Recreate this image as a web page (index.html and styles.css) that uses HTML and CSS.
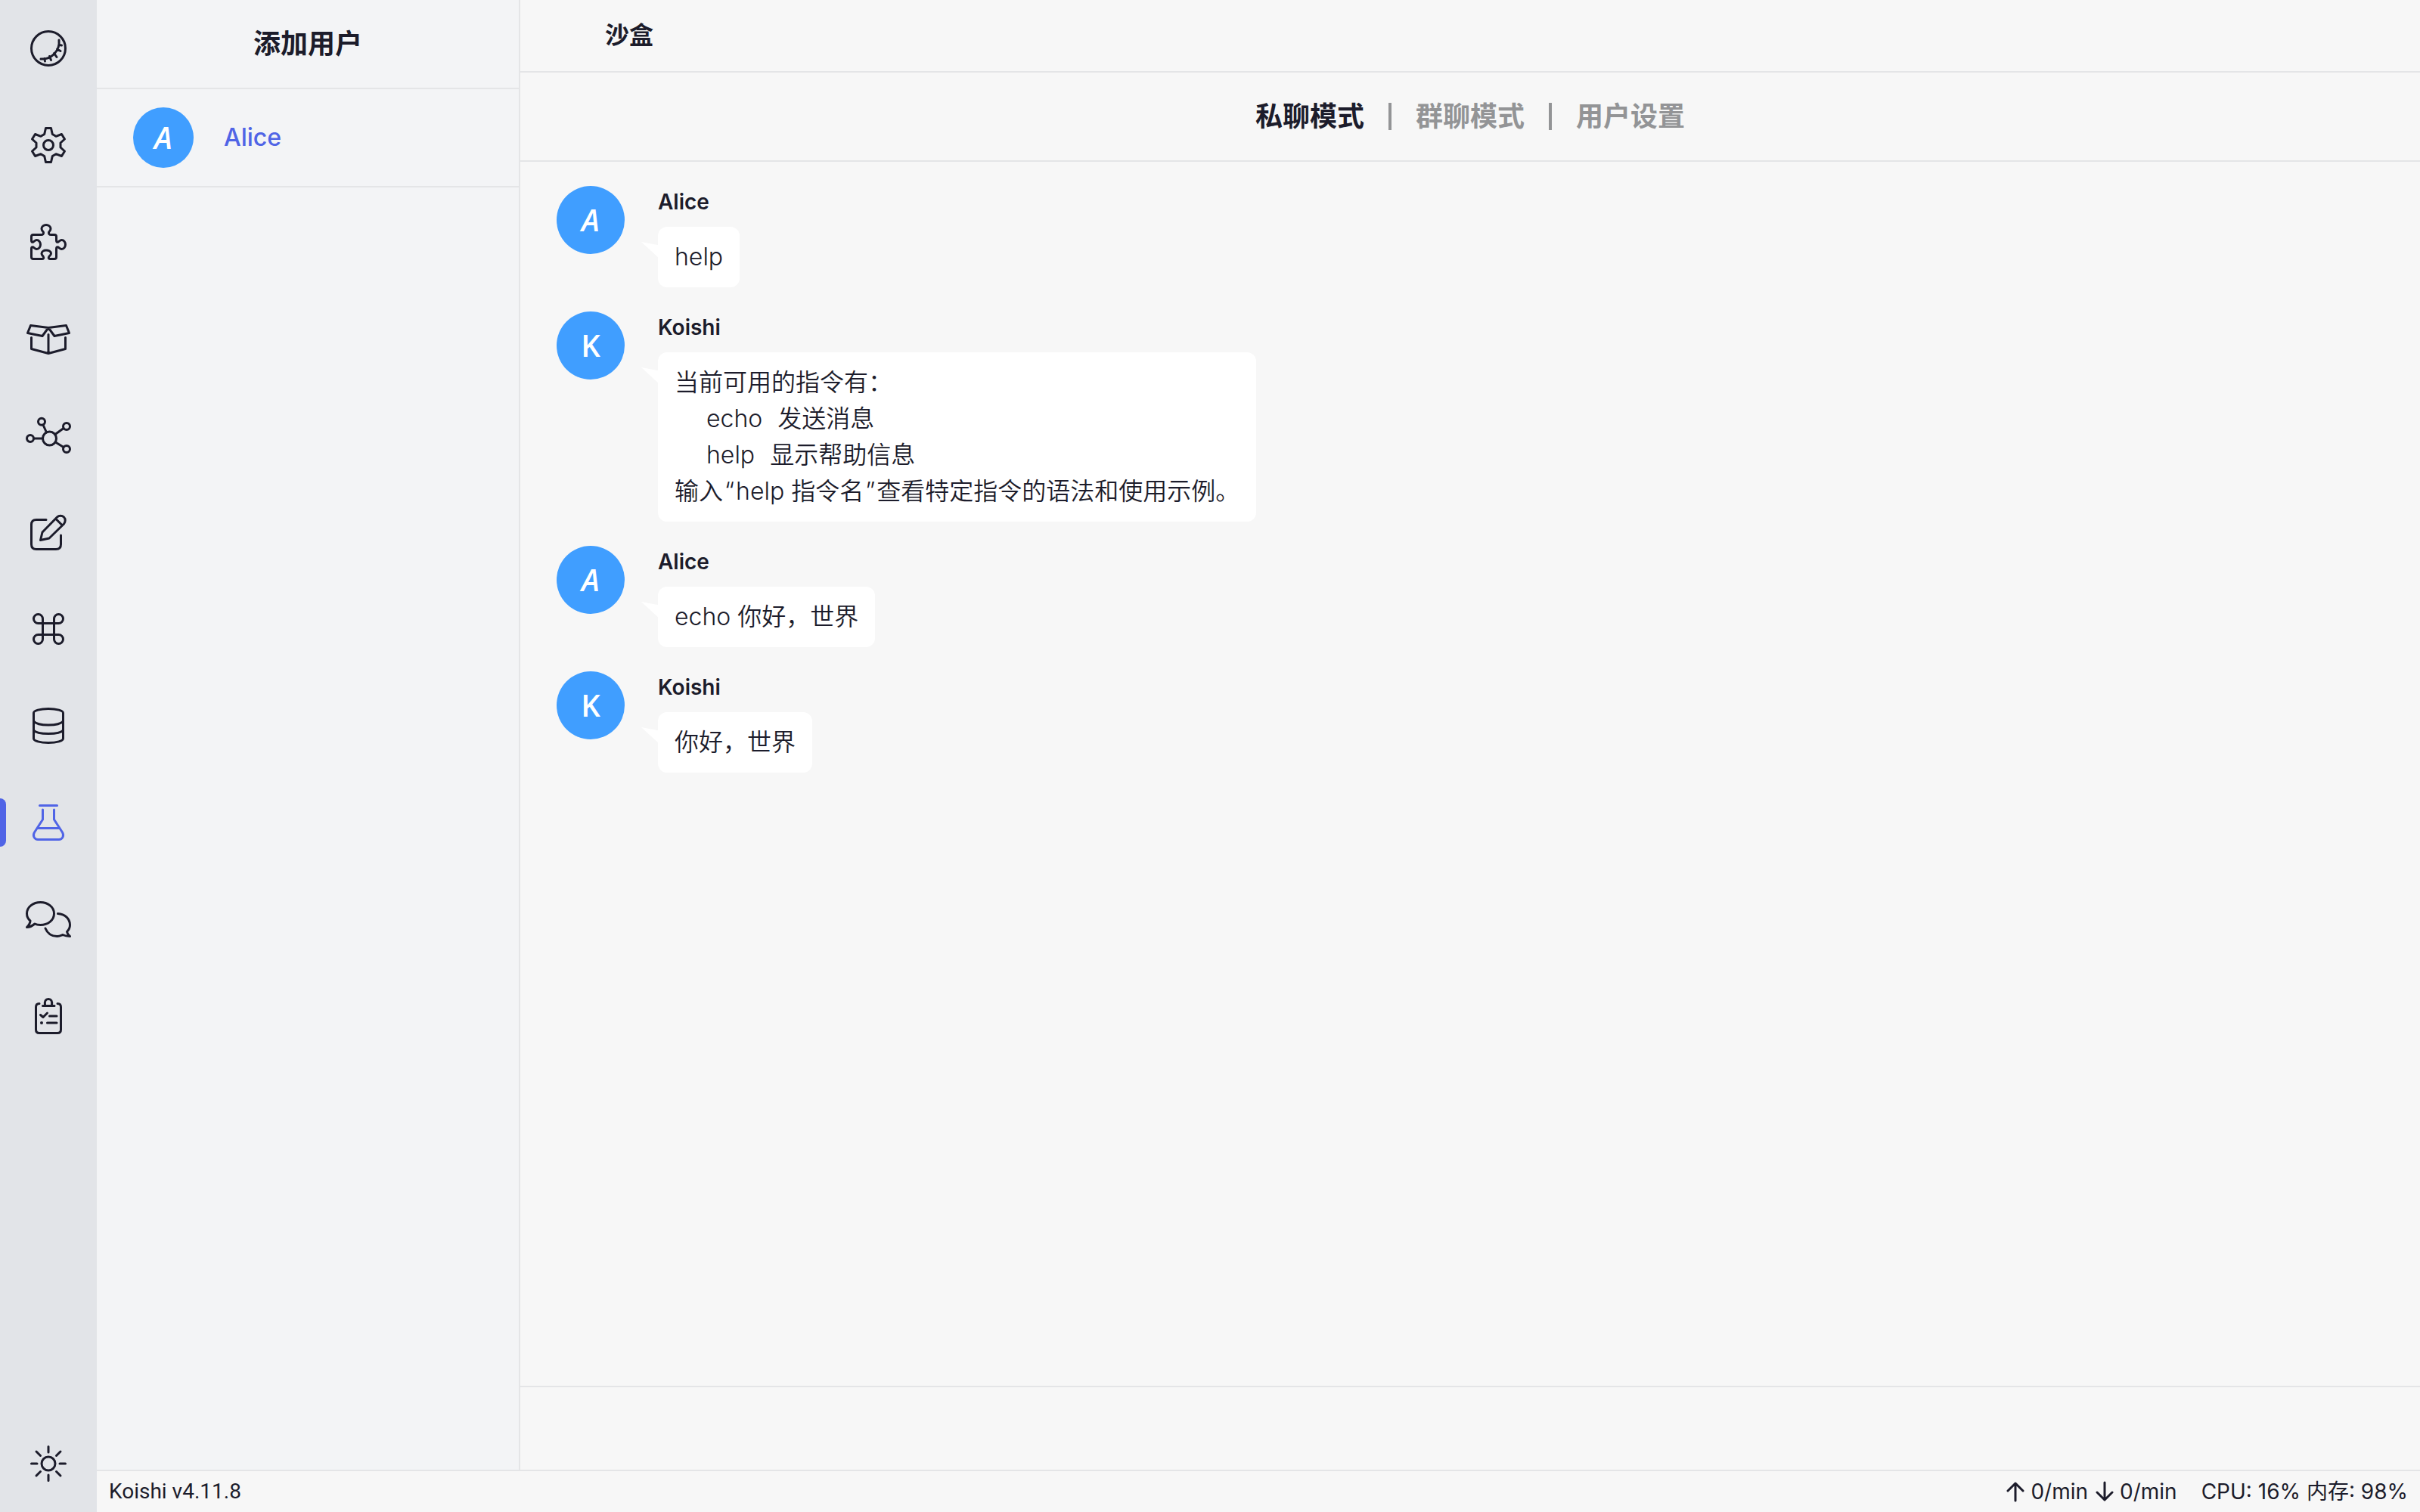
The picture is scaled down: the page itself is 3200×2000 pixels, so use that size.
FILE: index.html
```html
<!DOCTYPE html>
<html lang="zh-CN">
<head>
<meta charset="utf-8">
<title>沙盒</title>
<link rel="stylesheet" href="styles.css">
</head>
<body>
<div class="app">
  <nav class="activity" aria-label="导航">
    <a class="activity-item" href="#home" aria-label="首页"><svg class="icon" viewBox="0 0 64 64"><circle cx="32" cy="32" r="22.5"/><path d="M46 21C47.500 34 37 47 22 46M46.500 27.500L49.500 28M43.500 33L48 35.500M39.500 38.500L43 43.500M33.500 42.500L35.500 47.500M27 45.500L27.500 49"/></svg></a>
    <a class="activity-item" href="#settings" aria-label="设置"><svg class="icon" viewBox="0 0 64 64"><circle cx="32" cy="32" r="6.500"/><path d="M28.500 9.500H35.500L37.300 17.500L42 20.300L49.500 17.500L53.500 24L48 29V35L53.500 40L49.500 46.500L42 43.700L37.300 46.500L35.500 54.500H28.500L26.700 46.500L22 43.700L14.500 46.500L10.500 40L16 35V29L10.500 24L14.500 17.500L22 20.300L26.700 17.500Z"/></svg></a>
    <a class="activity-item" href="#plugins" aria-label="插件"><svg class="icon" viewBox="0 0 64 64"><path d="M9.500 30V25Q9.500 22.500 12 22.500H22.500Q26 22.500 25.500 19.500C25 18 23 17 23 14.500C23 11.500 26 9.500 29 9.500S35 11.500 35 14.500C35 17 33 18 32.500 19.500Q32 22.500 35.500 22.500H40Q42.500 22.500 42.500 25V30Q42.500 33 45 32C46.500 31 47.500 29.500 49.500 29.500C52.500 29.500 54.500 32.500 54.500 35.500S52.500 41.500 49.500 41.500C47.500 41.500 46.500 40 45 39Q42.500 38 42.500 41V52Q42.500 54.500 40 54.500H34.500Q31.500 54.500 32.500 52C33 50.500 35.500 49.500 35.500 47.500C35.500 44.500 32 43 29 43S23 44.500 23 47.500C23 49.500 25 50.500 25.500 52Q26.500 54.500 23.500 54.500H12Q9.500 54.500 9.500 52V41Q9.500 38 12 39C13.500 40 14.500 41.500 16.500 41.500C19.500 41.500 21.500 38.500 21.500 35.500S19.500 29.500 16.500 29.500C14.500 29.500 13.500 31 12 32Q9.500 33 9.500 30Z"/></svg></a>
    <a class="activity-item" href="#market" aria-label="插件市场"><svg class="icon" viewBox="0 0 64 64"><path d="M8.500 14.500L32 17.500L24 28.500L4.500 24.500ZM55.500 14.500L32 17.500L40 28.500L59.500 24.500ZM9.500 30.500V45.500L32 51.500L54.500 45.500V30.500M32 26.500V51.500"/></svg></a>
    <a class="activity-item" href="#graph" aria-label="依赖"><svg class="icon" viewBox="0 0 64 64"><circle cx="33.500" cy="36" r="9"/><circle cx="8" cy="36" r="4.500"/><circle cx="23" cy="13.700" r="4.500"/><circle cx="56" cy="20" r="4.500"/><circle cx="56" cy="50" r="4.500"/><path d="M12.500 36H24.500M25 18L29.500 28M52 22.500L41 30.500M52 47.500L41.500 41"/></svg></a>
    <a class="activity-item" href="#editor" aria-label="编辑"><svg class="icon" viewBox="0 0 64 64"><path d="M29 15.500H16Q9.500 15.500 9.500 22V48Q9.500 54.500 16 54.500H42Q48.500 54.500 48.500 48V36M21.500 42.500L24 32L43.500 12C46 9.500 50 9.500 52.500 12S54.500 18.500 52.500 21L33 40ZM41.500 14L50 22.500"/></svg></a>
    <a class="activity-item" href="#commands" aria-label="指令"><svg class="icon" viewBox="0 0 64 64"><path d="M24.500 24.500H18.500A6 6 0 1 1 24.500 18.500V45.500A6 6 0 1 1 18.500 39.500H45.500A6 6 0 1 1 39.500 45.500V18.500A6 6 0 1 1 45.500 24.500Z"/></svg></a>
    <a class="activity-item" href="#database" aria-label="数据库"><svg class="icon" viewBox="0 0 64 64"><path d="M12.500 15C12.500 12 21 9.500 32 9.500S51.500 12 51.500 15V49C51.500 52 43 54.500 32 54.500S12.500 52 12.500 49ZM12.500 26C15 29 23 31 32 31S49 29 51.500 26M12.500 38C15 41 23 42.500 32 42.500S49 41 51.500 38"/></svg></a>
    <a class="activity-item active" href="#sandbox" aria-label="沙盒" aria-current="page"><svg class="icon" viewBox="0 0 64 64"><path d="M20.500 9.500H43.500M24.500 15V28L13.500 45C10.500 50 14 54.500 18 54.500H46C50 54.500 53.500 50 50.500 45L39.500 28V15M18 39.500H46"/></svg></a>
    <a class="activity-item" href="#chat" aria-label="聊天"><svg class="icon" viewBox="0 0 64 64"><path d="M8 34C5 31.500 3.500 28 3.500 24.500C3.500 15.500 12 9.500 21.500 9.500S39.500 15.500 39.500 24.500S31 39.500 21.500 39.500C18.500 39.500 16 39 14 38C11 40.500 7.500 42.500 3.500 42.500C6 40 8 37.500 8 34ZM44.500 24.500C54 25 60.500 31.500 60.500 39.500C60.500 43 59 46 56.500 48.500C57 51 58.500 53 60.500 54.500C57 54.500 54 54 51 52.500C48.500 53.500 46.500 54.500 43.500 54.500C36 54.500 30.500 50 28 44"/></svg></a>
    <a class="activity-item" href="#logs" aria-label="日志"><svg class="icon" viewBox="0 0 64 64"><path d="M20 15.500Q15.500 15.500 15.500 20V50Q15.500 54.500 20 54.500H44Q48.500 54.500 48.500 50V20Q48.500 15.500 44 15.500M24.500 18.500H40M27.500 18C26.500 12 28.500 9.500 32 9.500S37.500 12 36.500 18M21.500 30.500L25 33.500L30.500 28M33.500 32H43M30.500 41H43"/><circle class="dot" cx="23" cy="41" r="2"/></svg></a>
    <button class="activity-item theme" type="button" aria-label="切换主题"><svg class="icon" viewBox="0 0 64 64"><circle cx="32" cy="32" r="9"/><path d="M32 9.500V17M32 47V54.500M9.500 32H17M47 32H54.500M16 16L21.500 21.500M42.500 42.500L48 48M48 16L42.500 21.500M21.500 42.500L16 48"/></svg></button>
  </nav>

  <div class="workspace">
    <div class="columns">
      <aside class="users">
        <button class="add-user" type="button">添加用户</button>
        <a class="user" href="#alice"><span class="avatar small alice">A</span><span class="user-name">Alice</span></a>
      </aside>

      <main class="main">
        <header class="page-header"><h1 class="page-title">沙盒</h1></header>
        <div class="tabs">
          <button class="tab selected" type="button">私聊模式</button>
          <span class="divider"></span>
          <button class="tab" type="button">群聊模式</button>
          <span class="divider"></span>
          <button class="tab" type="button">用户设置</button>
        </div>

        <section class="messages">
          <article class="message">
            <span class="avatar alice">A</span>
            <div class="message-body"><h2 class="sender">Alice</h2><p class="bubble">help</p></div>
          </article>
          <article class="message">
            <span class="avatar">K</span>
            <div class="message-body"><h2 class="sender">Koishi</h2>
              <div class="bubble">
                <p class="line">当前可用的指令有：</p>
                <p class="line command"><span>echo</span><span>发送消息</span></p>
                <p class="line command"><span>help</span><span>显示帮助信息</span></p>
                <p class="line">输入<span class="quote">“</span>help 指令名<span class="quote">”</span>查看特定指令的语法和使用示例。</p>
              </div>
            </div>
          </article>
          <article class="message">
            <span class="avatar alice">A</span>
            <div class="message-body"><h2 class="sender">Alice</h2><p class="bubble">echo 你好，世界</p></div>
          </article>
          <article class="message">
            <span class="avatar">K</span>
            <div class="message-body"><h2 class="sender">Koishi</h2><p class="bubble">你好，世界</p></div>
          </article>
        </section>

        <form class="composer"><input class="composer-input" type="text" aria-label="发送消息"></form>
      </main>
    </div>

    <footer class="status">
      <span class="version">Koishi v4.11.8</span>
      <div class="stats">
        <span class="rate"><svg class="arrow" viewBox="0 0 24 28"><path d="M12 26V3M2 13L12 3L22 13"/></svg>0/min</span>
        <span class="rate"><svg class="arrow" viewBox="0 0 24 28"><path d="M12 2V25M2 15L12 25L22 15"/></svg>0/min</span>
        <span class="load">CPU: 16% 内存: 98%</span>
      </div>
    </footer>
  </div>
</div>
</body>
</html>
```
FILE: styles.css
```css
:root {
  --text: #1c1c2b;
  --muted: #939496;
  --accent: #5064e6;
  --border: #e4e5e7;
  --cjk: "Noto Sans CJK SC";
}

* { box-sizing: border-box; }

body {
  margin: 0;
  background: #f7f7f7;
  color: var(--text);
  font: 400 32px/48px Inter, var(--cjk), sans-serif;
}

h1, h2, p { margin: 0; }

button {
  padding: 0;
  border: 0;
  background: none;
  color: inherit;
  font: inherit;
  cursor: pointer;
}

a { color: inherit; text-decoration: none; }

.app { display: flex; min-height: 100vh; }

.activity {
  display: flex;
  flex: none;
  flex-direction: column;
  width: 128px;
  background: #e2e4e8;
}

.activity-item {
  position: relative;
  display: flex;
  align-items: center;
  justify-content: center;
  height: 128px;
}

.activity-item.active { color: var(--accent); }

.activity-item.active::before {
  content: "";
  position: absolute;
  left: 0;
  top: 32px;
  width: 8px;
  height: 64px;
  border-radius: 0 8px 8px 0;
  background: var(--accent);
}

.theme { margin-top: auto; }

.icon {
  width: 64px;
  height: 64px;
  fill: none;
  stroke: currentColor;
  stroke-width: 3;
  stroke-linecap: round;
  stroke-linejoin: round;
}

.dot { fill: currentColor; stroke: none; }

.workspace { display: flex; flex: 1; flex-direction: column; min-width: 0; }
.columns { display: flex; flex: 1; }

.users {
  flex: none;
  width: 560px;
  border-right: 2px solid var(--border);
  background: #f3f4f6;
}

.add-user {
  display: block;
  width: 100%;
  height: 118px;
  border-bottom: 2px solid var(--border);
  font-size: 36px;
  font-weight: 700;
}

.user {
  display: flex;
  align-items: center;
  gap: 40px;
  height: 130px;
  padding: 0 48px;
  border-bottom: 2px solid var(--border);
  color: var(--accent);
  font-weight: 500;
}

.avatar {
  display: flex;
  flex: none;
  align-items: center;
  justify-content: center;
  width: 90px;
  height: 90px;
  border-radius: 50%;
  background: #409eff;
  color: #fff;
  font-family: "Open Sans", sans-serif;
  font-size: 40px;
  font-weight: 600;
}

.avatar.small { width: 80px; height: 80px; }
.avatar.alice { font-style: italic; }

.main { display: flex; flex: 1; flex-direction: column; min-width: 0; }

.page-header {
  display: flex;
  align-items: center;
  height: 96px;
  padding: 0 112px;
  border-bottom: 2px solid var(--border);
}

.page-title { font-size: 32px; font-weight: 700; }

.tabs {
  display: flex;
  align-items: center;
  justify-content: center;
  gap: 32px;
  height: 118px;
  border-bottom: 2px solid var(--border);
  color: var(--muted);
  font-size: 36px;
}

.tab { font-weight: 700; }
.tab.selected { color: var(--text); }
.divider { width: 4px; height: 36px; background: var(--muted); }

.messages {
  display: flex;
  flex: 1;
  flex-direction: column;
  gap: 32px;
  padding: 32px 48px;
}

.message { display: flex; align-items: flex-start; gap: 44px; }

.sender {
  margin-bottom: 12px;
  font-size: 28px;
  font-weight: 600;
  line-height: 42px;
}

.bubble {
  position: relative;
  width: fit-content;
  padding: 16px 22px;
  border-radius: 12px;
  background: #fff;
  font-weight: 350;
}

.bubble::before {
  content: "";
  position: absolute;
  left: -22px;
  top: 20px;
  width: 24px;
  height: 22px;
  background: #fff;
  clip-path: polygon(0 0, 100% 20%, 100% 100%);
}

.command { display: flex; gap: 20px; padding-left: 42px; }
.quote { padding: 0 2px; }

.composer {
  display: flex;
  height: 111px;
  border-top: 2px solid var(--border);
}

.composer-input {
  flex: 1;
  padding: 0 48px;
  border: 0;
  outline: 0;
  background: none;
  color: inherit;
  font: inherit;
}

.status {
  display: flex;
  align-items: center;
  justify-content: space-between;
  height: 56px;
  padding: 0 16px;
  border-top: 2px solid var(--border);
  font-size: 28px;
}

.version { font-family: Roboto, sans-serif; }
.stats { display: flex; gap: 10px; }
.rate { display: flex; align-items: center; gap: 8px; }
.load { margin-left: 22px; }

.arrow {
  width: 24px;
  height: 28px;
  fill: none;
  stroke: currentColor;
  stroke-width: 3;
  stroke-linecap: round;
  stroke-linejoin: round;
}
```
